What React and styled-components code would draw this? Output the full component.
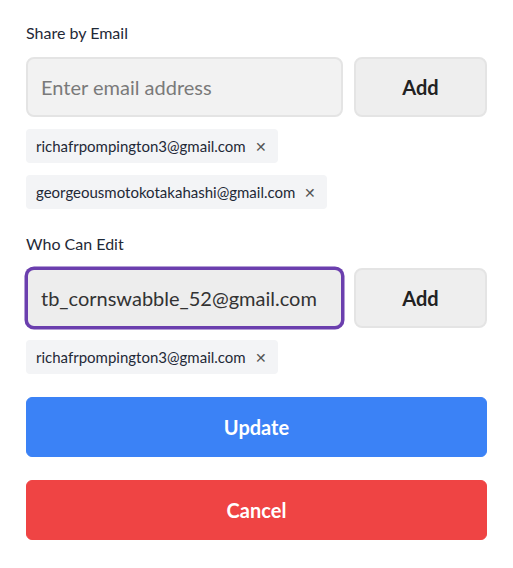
import React from 'react'
import styled, { createGlobalStyle } from 'styled-components'

const GlobalStyle = createGlobalStyle`
  body {
    margin: 0;
    background: #fff;
    font-family: 'Lato', 'Open Sans', sans-serif;
    color: #1f2937;
  }
`

const Page = styled.div`
  width: 461px;
  padding: 23px 26px 0;
`

const Section = styled.section`
  margin-bottom: 25px;
`

const Label = styled.div`
  font-size: 16px;
  line-height: 20px;
  color: #1f2937;
  margin-bottom: 14px;
`

const Row = styled.div`
  display: grid;
  grid-template-columns: 317px 133px;
  column-gap: 11px;
  height: 60px;
`

const Input = styled.input`
  box-sizing: border-box;
  width: 100%;
  height: 60px;
  padding: 0 13px;
  font-family: inherit;
  font-size: 20px;
  color: #333;
  background: ${p => (p.$focused ? '#ededed' : '#f2f2f2')};
  border: 2px solid ${p => (p.$focused ? '#6b3fae' : '#e4e4e4')};
  border-radius: 8px;
  outline: none;
  box-shadow: ${p => (p.$focused ? '0 0 0 1.5px #6b3fae' : 'none')};

  &::placeholder {
    color: #7a7a7a;
  }
`

const AddButton = styled.button`
  height: 60px;
  font-family: inherit;
  font-size: 20px;
  font-weight: 700;
  color: #222;
  background: #eeeeee;
  border: 2px solid #e4e4e4;
  border-radius: 8px;
`

const Chips = styled.div`
  display: flex;
  flex-direction: column;
  align-items: flex-start;
  gap: 12px;
  margin-top: 12px;
`

const Chip = styled.div`
  display: flex;
  align-items: center;
  height: 34px;
  padding: 0 11px 0 10px;
  background: #f3f4f6;
  border-radius: 4px;
  font-size: 15px;
  color: #1f2937;
`

const Remove = styled.span`
  margin-left: 9px;
  font-size: 14px;
  color: #555;
`

const Actions = styled.div`
  display: flex;
  flex-direction: column;
  gap: 23px;
  margin-top: -2px;
`

const ActionButton = styled.button`
  height: 60px;
  width: 100%;
  font-family: inherit;
  font-size: 20px;
  font-weight: 700;
  color: #fff;
  background: ${p => p.$bg};
  border: 1px solid ${p => p.$bg};
  border-radius: 6px;
`

const EmailSection = ({ label, value, placeholder, focused, emails }) => (
  <Section>
    <Label>{label}</Label>
    <Row>
      <Input
        $focused={focused}
        placeholder={placeholder}
        defaultValue={value}
      />
      <AddButton>Add</AddButton>
    </Row>
    <Chips>
      {emails.map(email => (
        <Chip key={email}>
          {email}
          <Remove>✕</Remove>
        </Chip>
      ))}
    </Chips>
  </Section>
)

const App = () => (
  <>
    <GlobalStyle />
    <Page>
      <EmailSection
        label="Share by Email"
        placeholder="Enter email address"
        emails={['richafrpompington3@gmail.com', 'georgeousmotokotakahashi@gmail.com']}
      />
      <EmailSection
        label="Who Can Edit"
        value="tb_cornswabble_52@gmail.com"
        focused
        emails={['richafrpompington3@gmail.com']}
      />
      <Actions>
        <ActionButton $bg="#3b82f6">Update</ActionButton>
        <ActionButton $bg="#ef4444">Cancel</ActionButton>
      </Actions>
    </Page>
  </>
)

export default App
